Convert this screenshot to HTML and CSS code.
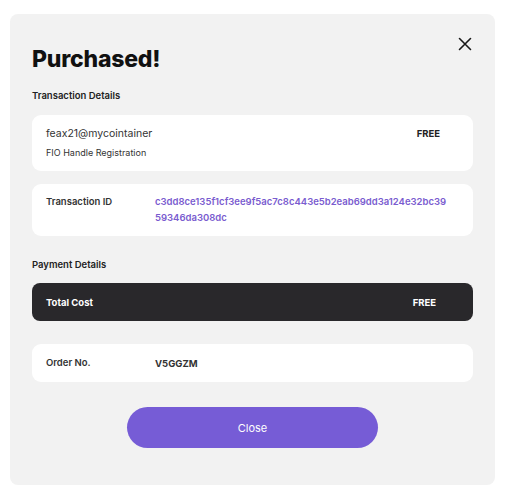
FILE: index.html
```html
<!DOCTYPE html>
<html>
<head>
<meta charset="utf-8">
<link rel="stylesheet" href="styles.css">
</head>
<body>
<div class="modal">
  <button class="close-x" aria-label="Close">
    <svg width="14" height="14" viewBox="0 0 14 14"><path d="M1.5 1.5L12.5 12.5M12.5 1.5L1.5 12.5" stroke="#1a1a1a" stroke-width="1.6" stroke-linecap="round"/></svg>
  </button>
  <h1 class="title">Purchased!</h1>
  <div class="section-label">Transaction Details</div>
  <div class="card item-card">
    <div class="item-info">
      <div class="item-name">feax21@mycointainer</div>
      <div class="item-sub">FIO Handle Registration</div>
    </div>
    <div class="item-price">FREE</div>
  </div>
  <div class="card row-card tx-card">
    <div class="row-label">Transaction ID</div>
    <div class="tx-id">c3dd8ce135f1cf3ee9f5ac7c8c443e5b2eab69dd3a124e32bc3959346da308dc</div>
  </div>
  <div class="section-label pay-label">Payment Details</div>
  <div class="total-bar">
    <div class="total-label">Total Cost</div>
    <div class="total-value">FREE</div>
  </div>
  <div class="card row-card order-card">
    <div class="row-label">Order No.</div>
    <div class="order-value">V5GGZM</div>
  </div>
  <div class="actions">
    <button class="close-btn">Close</button>
  </div>
</div>
</body>
</html>
```

FILE: styles.css
```css
* { box-sizing: border-box; }
html, body { margin: 0; padding: 0; background: #ffffff; }
body {
  font-family: "Inter", "Liberation Sans", sans-serif;
  color: #222;
  padding: 14px 18px 10px 10px;
}
.modal {
  position: relative;
  width: 485px;
  height: 471px;
  background: #f2f2f2;
  border-radius: 8px;
  padding: 30px 22px 0 22px;
}
.close-x {
  position: absolute;
  top: 23px;
  right: 23px;
  width: 14px;
  height: 14px;
  padding: 0;
  border: none;
  background: none;
  display: block;
}
.close-x svg { display: block; }
.title {
  margin: 0;
  font-size: 23px;
  font-weight: 800;
  line-height: 30px;
  color: #111;
  letter-spacing: -0.2px;
}
.section-label {
  margin-top: 15px;
  font-size: 9.5px;
  font-weight: 600;
  line-height: 14px;
  color: #222;
}
.card {
  background: #fff;
  border-radius: 9px;
}
.item-card {
  margin-top: 12px;
  height: 56px;
  display: flex;
  justify-content: space-between;
  padding: 12px 33px 0 14px;
}
.item-name {
  font-size: 10.5px;
  line-height: 14px;
  color: #333;
}
.item-sub {
  margin-top: 6px;
  font-size: 9px;
  line-height: 12px;
  color: #333;
}
.item-price {
  font-size: 9.5px;
  font-weight: 700;
  line-height: 14px;
  color: #222;
}
.row-card {
  display: grid;
  grid-template-columns: 109px 1fr;
  padding: 0 14px;
  align-items: start;
}
.tx-card {
  margin-top: 13px;
  height: 52px;
  padding-top: 10px;
}
.row-label {
  font-size: 9.5px;
  font-weight: 600;
  line-height: 16px;
  color: #333;
}
.tx-id {
  font-size: 9.5px;
  font-weight: 600;
  line-height: 16px;
  color: #7a5ccf;
  word-break: break-all;
  padding-right: 10px;
}
.pay-label { margin-top: 22px; }
.total-bar {
  margin-top: 11px;
  height: 38px;
  background: #29282b;
  border-radius: 8px;
  display: flex;
  justify-content: space-between;
  align-items: center;
  padding: 0 37px 0 14px;
  color: #fff;
  font-size: 9.5px;
  font-weight: 700;
}
.order-card {
  margin-top: 23px;
  height: 38px;
  align-items: center;
}
.order-value {
  font-size: 9.5px;
  font-weight: 700;
  color: #333;
}
.actions {
  display: flex;
  justify-content: center;
  margin-top: 25px;
}
.close-btn {
  width: 251px;
  height: 41px;
  border: none;
  border-radius: 21px;
  background: #765cd6;
  color: #fff;
  font-family: inherit;
  font-size: 11px;
  font-weight: 400;
}
```
